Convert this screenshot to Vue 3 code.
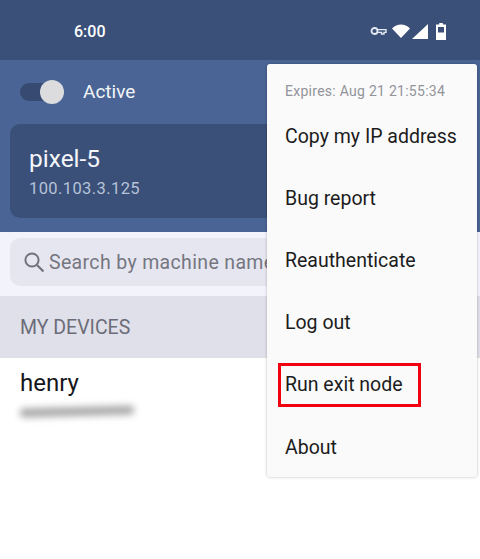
<script setup>
const menuItems = ['Copy my IP address', 'Bug report', 'Reauthenticate', 'Log out', 'Run exit node', 'About']
</script>

<template>
  <div class="screen">
    <header class="status">
      <span class="time">6:00</span>
      <div class="status-icons">
        <svg width="17" height="10" viewBox="0 0 17 10" class="key">
          <circle cx="4.5" cy="5" r="3" fill="none" stroke="#e4e9f2" stroke-width="1.8" />
          <path d="M7.5 3.6H16V6.4H14V8H11.5V6.4H7.5" fill="none" stroke="#e4e9f2" stroke-width="1.4" />
        </svg>
        <svg width="18" height="14" viewBox="0 0 18 14">
          <path d="M0 4.5C5 -1 13 -1 18 4.5L9 14Z" fill="#fff" />
        </svg>
        <svg width="16" height="15" viewBox="0 0 16 15" class="signal">
          <path d="M16 0V15H0Z" fill="#fff" />
        </svg>
        <svg width="10" height="17" viewBox="0 0 10 17" class="battery">
          <path d="M3.2 0H6.8V1.5H10V17H0V1.5H3.2Z" fill="#fff" />
          <rect x="2" y="4" width="6" height="5.5" fill="#3a5078" />
        </svg>
      </div>
    </header>

    <section class="hero">
      <div class="toggle-row">
        <div class="toggle"><span class="thumb"></span></div>
        <span class="active">Active</span>
      </div>
      <div class="self-card">
        <div class="self-name">pixel-5</div>
        <div class="self-ip">100.103.3.125</div>
      </div>
    </section>

    <div class="search-wrap">
      <div class="search">
        <svg width="24" height="24" viewBox="0 0 24 24">
          <circle cx="10" cy="10" r="6.6" fill="none" stroke="#70727c" stroke-width="2" />
          <path d="M15 15L21.5 21.5" stroke="#70727c" stroke-width="2.2" />
        </svg>
        <span class="search-text">Search by machine name</span>
      </div>
    </div>

    <div class="section-head">MY DEVICES</div>

    <div class="device">
      <div class="device-name">henry</div>
      <div class="device-ip"></div>
    </div>

    <nav class="menu">
      <div class="expires">Expires: Aug 21 21:55:34</div>
      <div v-for="item in menuItems" :key="item" class="menu-item">
        <span :class="{ marked: item === 'Run exit node' }">{{ item }}</span>
      </div>
    </nav>
  </div>
</template>

<style scoped>
.screen {
  position: relative;
  width: 480px;
  height: 559px;
  overflow: hidden;
  background: #fff;
  font-family: Roboto, "Liberation Sans", sans-serif;
}

.status {
  height: 60px;
  box-sizing: border-box;
  padding: 2px 34px 0 74px;
  display: flex;
  align-items: center;
  justify-content: space-between;
  background: #3a5078;
}

.time {
  color: #fff;
  font-size: 16px;
  font-weight: 500;
}

.status-icons {
  display: flex;
  align-items: center;
  gap: 2px;
}

.key {
  margin-right: 3px;
}

.signal {
  margin-right: 6px;
}

.hero {
  height: 172px;
  box-sizing: border-box;
  padding: 0 10px;
  background: #4a6595;
}

.toggle-row {
  height: 64px;
  display: flex;
  align-items: center;
  padding-left: 10px;
}

.toggle {
  position: relative;
  width: 40px;
  height: 18px;
  margin-top: -1px;
  border-radius: 9px;
  background: #364a72;
}

.thumb {
  position: absolute;
  top: -3px;
  right: -4px;
  width: 24px;
  height: 24px;
  border-radius: 50%;
  background: #dcdcdf;
}

.active {
  margin-left: 23px;
  margin-top: -1px;
  color: #f2f4f8;
  font-size: 19px;
}

.self-card {
  height: 94px;
  box-sizing: border-box;
  padding: 21px 19px 0;
  border-radius: 10px;
  background: #3a5078;
}

.self-name {
  color: #f4f6fa;
  font-size: 24.5px;
  line-height: 28px;
}

.self-ip {
  margin-top: 6px;
  color: #b6c2d8;
  font-size: 16.5px;
  letter-spacing: 0.4px;
  line-height: 19px;
}

.search-wrap {
  height: 64px;
  box-sizing: border-box;
  padding: 6px 10px 10px;
  background: #f3f3fb;
}

.search {
  height: 48px;
  padding-left: 12px;
  display: flex;
  align-items: center;
  border-radius: 10px;
  background: #e6e6f0;
  overflow: hidden;
}

.search-text {
  margin-left: 3px;
  color: #75767f;
  font-size: 19.5px;
  letter-spacing: 0.35px;
  white-space: nowrap;
}

.section-head {
  height: 62px;
  box-sizing: border-box;
  padding: 21px 20px 0;
  background: #e0e0ea;
  color: #6b6c78;
  font-size: 19.5px;
  line-height: 21px;
}

.device {
  padding: 11px 20px 0;
}

.device-name {
  color: #15151a;
  font-size: 24px;
  line-height: 28px;
}

.device-ip {
  width: 114px;
  height: 9px;
  margin: 10px 0 0 0;
  background: #a8a8a8;
  border-radius: 4px;
  filter: blur(3.5px);
  transform: rotate(-1.5deg);
}

/* popup sits over the page */
.menu {
  position: absolute;
  top: 64px;
  left: 267px;
  width: 210px;
  height: 413px;
  box-sizing: border-box;
  padding-top: 17px;
  background: #fafafa;
  border-radius: 3px;
  box-shadow: 0 0 3px rgba(0, 0, 0, 0.28);
}

.expires {
  margin-bottom: 4px;
  padding-left: 18px;
  color: #93939a;
  font-size: 14px;
  line-height: 20px;
  letter-spacing: 0.27px;
  white-space: nowrap;
}

.menu-item {
  height: 62.2px;
  padding-left: 18px;
  display: flex;
  align-items: center;
  color: #1c1c20;
  font-size: 19.5px;
  white-space: nowrap;
}

.marked {
  position: relative;
}

/* red highlight drawn onto the screenshot */
.marked::after {
  content: "";
  position: absolute;
  top: -10px;
  left: -7px;
  width: 143px;
  height: 44px;
  box-sizing: border-box;
  border: 3px solid #f2000f;
}
</style>

<style>
html, body {
  margin: 0;
  background: #fff;
}
</style>
